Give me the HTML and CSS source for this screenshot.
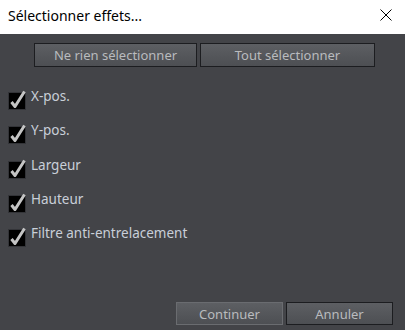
FILE: index.html
```html
<!DOCTYPE html>
<html lang="fr">
<head>
    <meta charset="UTF-8">
    <title>Sélectionner effets...</title>
    <link rel="stylesheet" href="styles.css">
</head>
<body>
    <div class="dialog">
        <div class="titlebar">
            <span class="title">Sélectionner effets...</span>
            <svg class="close" width="12" height="12" viewBox="0 0 12 12">
                <path d="M0.5 0.5 L11.5 11.5 M11.5 0.5 L0.5 11.5" stroke="#000" stroke-width="1" fill="none"/>
            </svg>
        </div>
        <div class="content">
            <div class="top-buttons">
                <button class="btn btn-dark wide1">Ne rien sélectionner</button>
                <button class="btn btn-dark wide2">Tout sélectionner</button>
            </div>
            <div class="options">
                <label class="option"><span class="check"></span>X-pos.</label>
                <label class="option"><span class="check"></span>Y-pos.</label>
                <label class="option"><span class="check"></span>Largeur</label>
                <label class="option"><span class="check"></span>Hauteur</label>
                <label class="option"><span class="check"></span>Filtre anti-entrelacement</label>
            </div>
            <div class="bottom-buttons">
                <button class="btn small">Continuer</button>
                <button class="btn btn-dark small">Annuler</button>
            </div>
        </div>
    </div>

    <script>
        // draw the check glyph into every box
        const mark = '<svg width="20" height="22" viewBox="0 0 20 22">' +
            '<rect x="1.5" y="4.5" width="17" height="17" fill="#000" stroke="#333438"/>' +
            '<path d="M4.5 14 L8 18.5 L17.5 3.5" stroke="#c4c4c4" stroke-width="3" fill="none" stroke-linejoin="round"/>' +
            '</svg>';
        document.querySelectorAll('.check').forEach(box => {
            box.innerHTML = mark;
        });
    </script>
</body>
</html>
```

FILE: styles.css
```css
body {
    margin: 0;
    font-family: "Noto Sans", "Open Sans", sans-serif;
}
.dialog {
    width: 405px;
    height: 330px;
    display: flex;
    flex-direction: column;
}
.titlebar {
    height: 34px;
    background-color: #ffffff;
    display: flex;
    align-items: center;
    justify-content: space-between;
    padding: 0 13px 0 8px;
}
.title {
    font-size: 14px;
    color: #000;
    margin-top: -3px;
}
.close {
    margin-top: -4px;
}
.content {
    flex: 1;
    background-color: #434448;
    display: flex;
    flex-direction: column;
}
.top-buttons {
    display: flex;
    gap: 3px;
    padding: 9px 0 0 34px;
}
.btn {
    font-family: "Noto Sans", "Open Sans", sans-serif;
    font-size: 13px;
    color: #b9bbbe;
    height: 24px;
    padding: 0;
    margin: 0;
    border: 1px solid #6a6c70;
    background: linear-gradient(#5d5f63, #4d4f53);
}
.btn-dark {
    border-color: #1c1d20;
}
.wide1 {
    width: 163px;
}
.wide2 {
    width: 175px;
}
.options {
    display: flex;
    flex-direction: column;
    gap: 12.3px;
    padding: 21px 0 0 7px;
}
.option {
    display: flex;
    align-items: flex-start;
    height: 22px;
    font-size: 13.5px;
    color: #c9cfd8;
    line-height: 16px;
}
.check {
    width: 20px;
    height: 22px;
    margin-right: 4px;
}
.bottom-buttons {
    margin-top: auto;
    display: flex;
    justify-content: flex-end;
    gap: 3px;
    padding: 0 12px 5px 0;
}
.small {
    width: 107px;
    height: 23px;
}
```
